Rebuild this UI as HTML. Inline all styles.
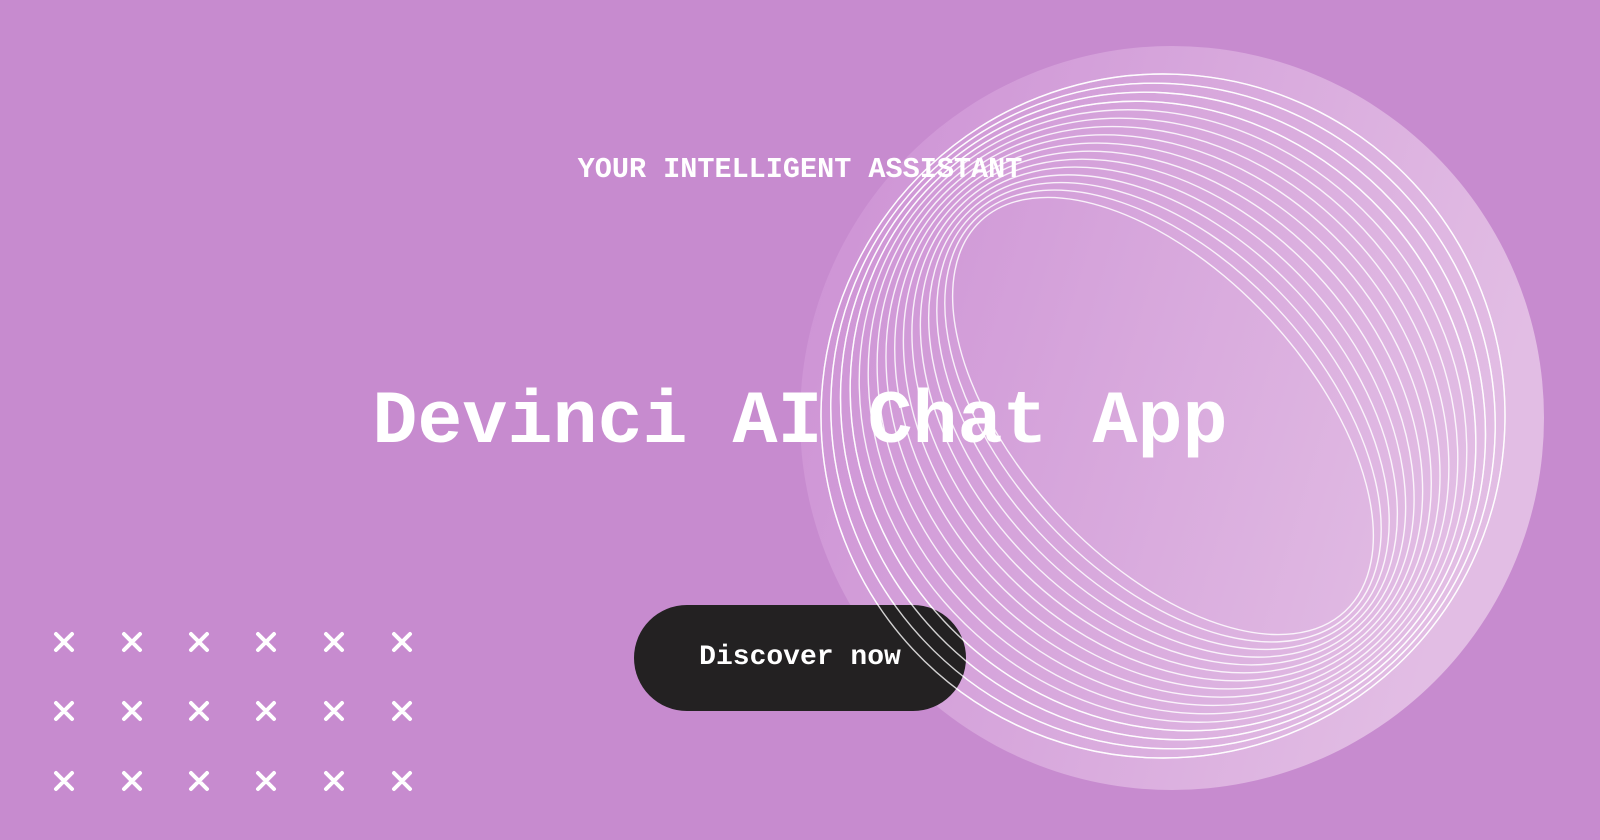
<!DOCTYPE html>
<html><head><meta charset="utf-8"><style>
html,body{margin:0;padding:0;width:1600px;height:840px;overflow:hidden}
body{background:#c78bcf;position:relative;font-family:"Liberation Mono",monospace;}
svg{position:absolute;left:0;top:0;display:block}
.t{position:absolute;left:0;width:1600px;text-align:center;color:#fff;font-weight:bold;white-space:nowrap}
.btn{position:absolute;left:634px;top:605px;width:332px;height:106px;border-radius:53px;background:#232122;color:#fff;font-weight:bold;font-size:28px;line-height:106px;text-align:center}
</style></head><body>
<svg width="1600" height="840">
<defs><linearGradient id="g" x1="0" y1="0" x2="1" y2="0.3">
<stop offset="0" stop-color="#cc90d4"/><stop offset="1" stop-color="#e2bde4"/></linearGradient></defs>
<circle cx="1172" cy="418" r="372" fill="url(#g)"/>
<g fill="none" stroke="#fff" stroke-opacity="0.85" stroke-width="1.4" transform="translate(1163 416) rotate(47)">
<ellipse rx="342" ry="342"/><ellipse rx="337" ry="328"/><ellipse rx="332" ry="314"/>
<ellipse rx="327" ry="300"/><ellipse rx="322" ry="287"/><ellipse rx="317" ry="274"/>
<ellipse rx="312" ry="261"/><ellipse rx="307" ry="248"/><ellipse rx="302" ry="235"/>
<ellipse rx="297" ry="222"/><ellipse rx="292" ry="209"/><ellipse rx="287" ry="196"/>
<ellipse rx="282" ry="183"/><ellipse rx="277" ry="170"/><ellipse rx="272" ry="157"/>
<ellipse rx="267" ry="144"/>
</g>
<g stroke="#fff" stroke-width="4" stroke-linecap="round">
<path d="M56 634l16 16M72 634l-16 16M124 634l16 16M140 634l-16 16M191 634l16 16M207 634l-16 16M258 634l16 16M274 634l-16 16M326 634l16 16M342 634l-16 16M394 634l16 16M410 634l-16 16"/>
<path d="M56 703l16 16M72 703l-16 16M124 703l16 16M140 703l-16 16M191 703l16 16M207 703l-16 16M258 703l16 16M274 703l-16 16M326 703l16 16M342 703l-16 16M394 703l16 16M410 703l-16 16"/>
<path d="M56 773l16 16M72 773l-16 16M124 773l16 16M140 773l-16 16M191 773l16 16M207 773l-16 16M258 773l16 16M274 773l-16 16M326 773l16 16M342 773l-16 16M394 773l16 16M410 773l-16 16"/>
</g>
</svg>
<div class="t" style="top:150px;font-size:28.5px;line-height:40px">YOUR INTELLIGENT ASSISTANT</div>
<div class="t" style="top:378px;font-size:75px;line-height:90px">Devinci AI Chat App</div>
<div class="btn">Discover now</div>
<svg width="1600" height="840">
<g fill="none" stroke="#fff" stroke-opacity="0.8" stroke-width="1.4" transform="translate(1163 416) rotate(47)">
<ellipse rx="342" ry="342"/><ellipse rx="337" ry="328"/><ellipse rx="332" ry="314"/><ellipse rx="327" ry="300"/>
</g>
</svg>
</body></html>
